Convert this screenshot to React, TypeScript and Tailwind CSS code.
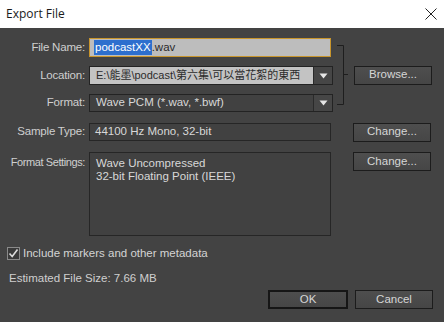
import React from "react";

const ui = "font-['Liberation_Sans',Arial,sans-serif]";
const cjk = "font-['Liberation_Sans','Noto_Sans_CJK_TC',sans-serif]";

// small grey push button used on the right side and in the footer
const Btn = ({ label, focused = false, className = "" }: { label: string; focused?: boolean; className?: string }) => (
  <div
    className={`flex items-center justify-center h-[19px] bg-gradient-to-b from-[#4e4e4e] to-[#464646] text-[#d6d6d6] text-[11.5px] ${
      focused ? "border-2 border-[#161616]" : "border border-[#1c1c1c]"
    } ${className}`}
  >
    {label}
  </div>
);

const Arrow = () => (
  <div className="w-[19px] h-full flex items-center justify-center border-l border-[#2a2a2a] bg-[#464646]">
    <svg width="9" height="6" viewBox="0 0 9 6">
      <path d="M0.5 0.5 H8.5 L4.5 5.5 Z" fill="#e6e6e6" />
    </svg>
  </div>
);

const Label = ({ text, className = "" }: { text: string; className?: string }) => (
  <div className={`w-[85px] shrink-0 text-right text-[#cfcfcf] text-[11.5px] whitespace-nowrap tracking-[-0.2px] ${className}`}>{text}</div>
);

export default function App() {
  return (
    <div className={`w-[444px] h-[322px] bg-[#434343] flex flex-col overflow-hidden ${ui}`}>
      {/* title bar */}
      <div className="h-[28px] bg-white flex items-center justify-between pl-[6px] pr-[7px] shrink-0">
        <span className="text-[12px] text-[#1a1a1a] font-['Open_Sans',sans-serif]">Export File</span>
        <svg width="12" height="12" viewBox="0 0 12 12">
          <path d="M0.5 0.5 L11.5 11.5 M11.5 0.5 L0.5 11.5" stroke="#222" strokeWidth="1" />
        </svg>
      </div>

      {/* name / location / format block */}
      <div className="flex items-center mt-[10px]">
        <div className="flex flex-col gap-[9px]">
          <div className="flex items-center h-[19px]">
            <Label text="File Name:" />
            <div className="ml-[4px] w-[242px] h-[19px] border border-[#c8952c] bg-[#bdbdbd] flex items-center pl-[4px] text-[11.5px]">
              <span className="bg-[#2d6fce] text-white px-[1px] leading-[15px]">podcastXX</span>
              <span className="text-[#2a2a2a]">.wav</span>
            </div>
          </div>
          <div className="flex items-center h-[19px]">
            <Label text="Location:" />
            <div className="ml-[4px] w-[244px] h-[19px] border border-[#232323] flex">
              <div className={`flex-1 bg-[#c3c3c3] text-[#2b2b2b] text-[11px] flex items-center pl-[6px] whitespace-nowrap overflow-hidden ${cjk}`}>
                E:\能墨\podcast\第六集\可以當花絮的東西
              </div>
              <Arrow />
            </div>
          </div>
          <div className="flex items-center h-[18px]">
            <Label text="Format:" />
            <div className="ml-[4px] w-[244px] h-[18px] border border-[#232323] flex bg-[#414141]">
              <div className="flex-1 text-[#d8d8d8] text-[11.5px] flex items-center pl-[6px]">Wave PCM (*.wav, *.bwf)</div>
              <Arrow />
            </div>
          </div>
        </div>

        {/* bracket linking the three rows */}
        <svg width="12" height="62" viewBox="0 0 12 62" className="ml-[4px]">
          <path d="M0 1.5 H6.5 V60.5 H0 M6.5 30.5 H11" stroke="#1e1e1e" strokeWidth="1" fill="none" />
        </svg>

        <Btn label="Browse..." className="ml-[5px] w-[78px]" />
      </div>

      {/* sample type */}
      <div className="flex items-center mt-[11px] h-[18px]">
        <Label text="Sample Type:" />
        <div className="ml-[4px] w-[242px] h-[18px] border border-[#262626] bg-[#414141] text-[#d8d8d8] text-[11.5px] flex items-center pl-[5px]">
          44100 Hz Mono, 32-bit
        </div>
        <Btn label="Change..." className="ml-[22px] w-[78px]" />
      </div>

      {/* format settings */}
      <div className="flex items-start mt-[11px]">
        <Label text="Format Settings:" className="mt-[2px] text-[11px] tracking-[-0.4px]" />
        <div className="ml-[4px] w-[242px] h-[84px] border border-[#262626] bg-[#414141] text-[#d8d8d8] text-[11.5px] leading-[13px] pl-[6px] pt-[4px]">
          <div>Wave Uncompressed</div>
          <div>32-bit Floating Point (IEEE)</div>
        </div>
        <Btn label="Change..." className="ml-[22px] w-[78px]" />
      </div>

      {/* metadata checkbox */}
      <div className="flex items-center mt-[9px] ml-[7px] gap-[3px]">
        <div className="w-[13px] h-[13px] border border-[#8a8a8a] bg-[#3a3a3a] flex items-center justify-center">
          <svg width="11" height="11" viewBox="0 0 11 11">
            <path d="M1.5 5.5 L4.2 8.5 L9.5 1.5" stroke="#dcdcdc" strokeWidth="1.6" fill="none" />
          </svg>
        </div>
        <span className="text-[#d4d4d4] text-[11.5px]">Include markers and other metadata</span>
      </div>

      <div className="mt-[8px] ml-[9px] text-[#cfcfcf] text-[11.5px]">Estimated File Size: 7.66 MB</div>

      {/* footer buttons */}
      <div className="flex justify-end gap-[7px] mt-auto mb-[13px] mr-[11px]">
        <Btn label="OK" focused className="w-[80px]" />
        <Btn label="Cancel" className="w-[78px]" />
      </div>
    </div>
  );
}
